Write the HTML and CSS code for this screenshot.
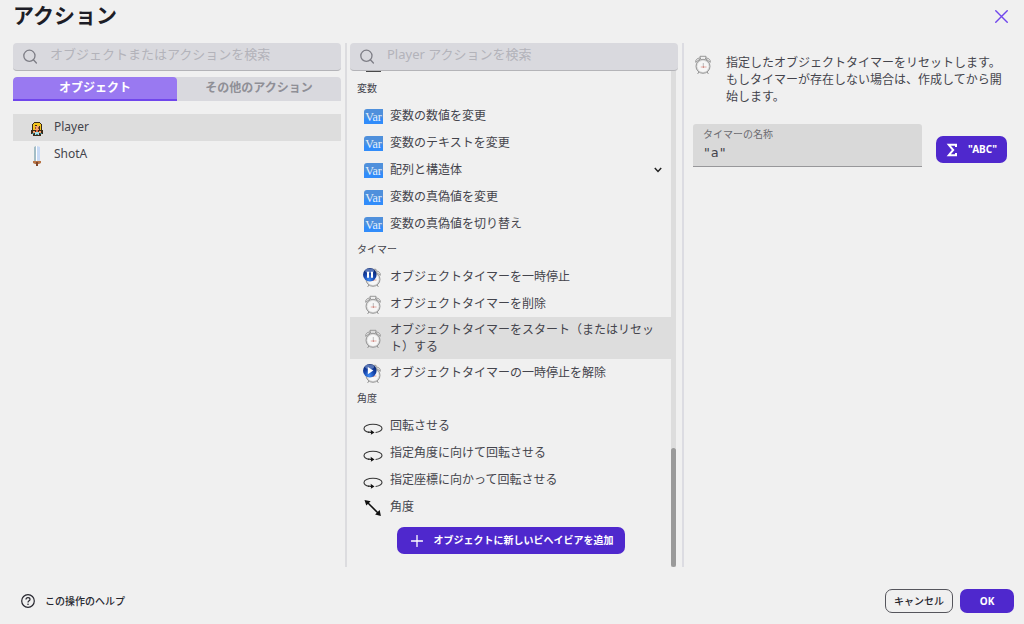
FILE: index.html
```html
<!DOCTYPE html>
<html lang="ja">
<head>
<meta charset="utf-8">
<title>アクション</title>
<link rel="stylesheet" href="styles.css">
</head>
<body>
<svg class="defs" aria-hidden="true">
  <defs>
    <linearGradient id="varfill" x1="0" y1="0" x2="0" y2="1"><stop offset=".5" stop-color="#4f90dc"/><stop offset=".7" stop-color="#318cfa"/></linearGradient>
    <radialGradient id="orb" cx=".45" cy=".85" r=".8"><stop offset="0" stop-color="#3f8cf5"/><stop offset=".5" stop-color="#1746ad"/><stop offset="1" stop-color="#06236f"/></radialGradient>
    <symbol id="search" viewBox="0 0 16 16"><g fill="none" stroke="currentColor" stroke-width="1.3" stroke-linecap="round"><circle cx="7.4" cy="6.8" r="5.6"/><path d="M11.4 10.8l3 3.2"/></g></symbol>
    <symbol id="clock" viewBox="0 0 20 20"><g stroke="#8f8f8f" stroke-width=".9"><path fill="none" d="M7 3V1.3h6V3M5.8 17l-1.2 2M14.2 17l1.2 2"/><path fill="#e9e9e9" d="M2.7 7.3C2.2 4.5 5 2.5 8 3.3zM17.3 7.3C17.8 4.5 15 2.5 12 3.3z"/><circle fill="#d8d8d8" cx="10" cy="11.3" r="7"/></g><circle fill="#f6f6f6" cx="10" cy="11.3" r="5.6"/><path d="M10.3 8v3.8" stroke="#aaa" stroke-width=".8"/><path d="M7.8 12h5.7" stroke="#e29a91" stroke-width=".8"/><circle cx="10.4" cy="12" r=".6" fill="#b34a42"/></symbol>
    <symbol id="pause" viewBox="0 0 20 20"><use href="#clock"/><circle cx="6.8" cy="6.8" r="6.8" fill="url(#orb)"/><ellipse cx="6.6" cy="2.8" rx="4.5" ry="2.2" fill="#8ba5da" opacity=".6"/><path d="M5 3.7v6M9 3.7v6" stroke="#fff" stroke-width="2"/></symbol>
    <symbol id="play" viewBox="0 0 20 20"><use href="#clock"/><circle cx="6.8" cy="6.8" r="6.8" fill="url(#orb)"/><ellipse cx="6.6" cy="2.8" rx="4.5" ry="2.2" fill="#8ba5da" opacity=".6"/><path d="M4.8 2.9v7.4l5.6-3.7z" fill="#fff"/></symbol>
    <symbol id="rotate" viewBox="0 0 20 20"><path d="M6 15.4C2.6 14.6 1 13 1 11.4 1 9.2 4.9 7.3 10 7.3s9 1.8 9 4c0 2.2-2.6 3.7-6.4 4.2" fill="none" stroke="#383838" stroke-width="1.1"/><path d="M7.6 12.8l3.9 2.7-3.7 2.3.3-1.8-3-.6.3-1 2.6.4z" fill="#111"/></symbol>
    <symbol id="angle" viewBox="0 0 20 20"><path d="M4 4l12.5 12.5" stroke="#111" stroke-width="1.6"/><path d="M1.5 2l6.2 1.2-4.4 4.3zM17.9 18l-1.2-6-4.6 4.6z" fill="#111"/></symbol>
    <symbol id="var" viewBox="0 0 20 16"><path d="M4 0h16v15H1V3q0-3 3-3z" fill="url(#varfill)"/><text x="10.5" y="12" text-anchor="middle" class="var-text">Var</text></symbol>
  </defs>
</svg>
<div class="dialog">
  <header class="head">
    <h1>アクション</h1>
    <button class="close" aria-label="閉じる"><svg viewBox="0 0 12 12"><path d="M.7.7l10.6 10.6M11.3.7L.7 11.3" stroke="#7046ec" stroke-width="1.3" stroke-linecap="round"/></svg></button>
  </header>
  <main class="columns">
    <section class="objects">
      <label class="search"><svg><use href="#search"/></svg><input type="text" aria-label="オブジェクトまたはアクションを検索" placeholder="オブジェクトまたはアクションを検索"></label>
      <div class="tabs" role="tablist">
        <button class="tab active" role="tab" aria-selected="true">オブジェクト</button>
        <button class="tab" role="tab" aria-selected="false">その他のアクション</button>
      </div>
      <ul class="object-list">
        <li class="object selected"><svg viewBox="0 0 12 14"><path fill="#3a2a18" d="M3 0h6v1h1v1h1v6h1v4h-2v2H2v-2H0V8h1V2h1V1h1z"/><path fill="#f3c51e" d="M3 1h6v1h1v6H9V4H6V3H4v5H2V2h1z"/><path fill="#f5a06a" d="M4 4h4v4H4zM2 9h2v2H2zM8 9h2v2H8z"/><path fill="#9a5433" d="M4 5h1v2H4zM7 5h1v2H7z"/><path fill="#e36940" d="M5 8h2v2H5z"/><path fill="#a3dde4" d="M4 10h4v3H4z"/><path fill="#387e86" d="M1 11h2v1H1zM9 11h2v1H9zM5 12h2v1H5z"/></svg>Player</li>
        <li class="object"><svg class="sword" viewBox="0 0 10 20"><path fill="#a3bdc6" d="M2 1l2-1v16H2z"/><path fill="#fff" d="M4 0h1v16H4z"/><path fill="#c8daf5" d="M5 0l3 1v15H5z"/><path fill="#b87546" d="M1 15h8v2l-2 1H3l-2-1z"/><path fill="#7f452b" d="M4 16h2v4H4z"/></svg>ShotA</li>
      </ul>
    </section>
    <section class="actions">
      <label class="search"><svg><use href="#search"/></svg><input type="text" aria-label="Player アクションを検索" placeholder="Player アクションを検索"></label>
      <div class="scroll">
        <div class="list">
          <div class="passed"></div>
          <h2>変数</h2>
          <div class="row"><svg class="var"><use href="#var"/></svg><span>変数の数値を変更</span></div>
          <div class="row"><svg class="var"><use href="#var"/></svg><span>変数のテキストを変更</span></div>
          <div class="row"><svg class="var"><use href="#var"/></svg><span>配列と構造体</span><svg class="chevron" viewBox="0 0 8 6"><path d="M.8 1L4 4.4 7.2 1" fill="none" stroke="#222" stroke-width="1.5"/></svg></div>
          <div class="row"><svg class="var"><use href="#var"/></svg><span>変数の真偽値を変更</span></div>
          <div class="row"><svg class="var"><use href="#var"/></svg><span>変数の真偽値を切り替え</span></div>
          <h2>タイマー</h2>
          <div class="row"><svg><use href="#pause"/></svg><span>オブジェクトタイマーを一時停止</span></div>
          <div class="row"><svg><use href="#clock"/></svg><span>オブジェクトタイマーを削除</span></div>
          <div class="row selected"><svg><use href="#clock"/></svg><span>オブジェクトタイマーをスタート（またはリセット）する</span></div>
          <div class="row"><svg><use href="#play"/></svg><span>オブジェクトタイマーの一時停止を解除</span></div>
          <h2>角度</h2>
          <div class="row"><svg><use href="#rotate"/></svg><span>回転させる</span></div>
          <div class="row"><svg><use href="#rotate"/></svg><span>指定角度に向けて回転させる</span></div>
          <div class="row"><svg><use href="#rotate"/></svg><span>指定座標に向かって回転させる</span></div>
          <div class="row"><svg><use href="#angle"/></svg><span>角度</span></div>
          <button class="primary add"><svg viewBox="0 0 12 12"><path d="M6 .5v11M.5 6h11" stroke="#fff" stroke-width="1.3" stroke-linecap="round"/></svg>オブジェクトに新しいビヘイビアを追加</button>
        </div>
        <div class="track"><div class="thumb"></div></div>
      </div>
    </section>
    <section class="details">
      <div class="description"><svg><use href="#clock"/></svg><p>指定したオブジェクトタイマーをリセットします。もしタイマーが存在しない場合は、作成してから開始します。</p></div>
      <div class="parameter">
        <div class="field"><label for="timer">タイマーの名称</label><input id="timer" type="text" value="&quot;a&quot;"></div>
        <button class="primary expression"><svg viewBox="0 0 12 14"><path d="M10 4V1.8H2.8L7.2 7l-4.4 5.2H10V10" fill="none" stroke="#fff" stroke-width="2"/></svg>"ABC"</button>
      </div>
    </section>
  </main>
  <footer class="foot">
    <button class="help"><svg viewBox="0 0 14 14"><g fill="none" stroke="#26262e" stroke-width="1.2"><circle cx="7" cy="7" r="6.3"/><path d="M5 5.6C5 4.3 5.8 3.7 7 3.7s2 .7 2 1.7C9 6.8 7 6.7 7 8.4"/></g><circle cx="7" cy="10.2" r=".8" fill="#26262e"/></svg>この操作のヘルプ</button>
    <button class="cancel">キャンセル</button>
    <button class="primary ok">OK</button>
  </footer>
</div>
</body>
</html>
```
FILE: styles.css
```css
* { box-sizing: border-box; }
body { margin: 0; background: #f0f0f0; color: #44444c; font: 12px/17px "Noto Sans", "Noto Sans CJK JP", sans-serif; }
button, input { font: inherit; color: inherit; margin: 0; padding: 0; border: 0; background: none; }
h1, h2, p, ul { margin: 0; padding: 0; }
svg { flex: none; display: block; }
.defs { position: absolute; width: 0; height: 0; }
.dialog { display: flex; flex-direction: column; min-height: 100vh; }

.head { display: flex; justify-content: space-between; align-items: center; height: 32px; margin-bottom: 11px; padding: 0 16px 0 13px; }
h1 { font-size: 21px; line-height: 30px; padding-bottom: 2px; color: #1d1d26; }
.close svg { width: 13px; height: 13px; }

.columns { flex: 1; display: grid; grid-template-columns: 332fr 337fr 329fr; padding: 0 13px; }
.objects { padding-right: 4px; }
.actions { display: flex; flex-direction: column; padding: 0 4px 0 3px; border-left: 2px solid #dcdcdf; }
.details { padding: 10px 4px 0 9px; border-left: 2px solid #dcdce2; }

.search { display: flex; align-items: center; gap: 12px; height: 28px; padding: 0 9px; background: #d9d9de; border-radius: 4px; border-bottom: 1px solid #b4b4b8; color: #7d7d85; }
.search svg { width: 16px; height: 16px; }
.search input { flex: 1; min-width: 0; height: 18px; margin-bottom: 6px; font-size: 13px; outline: 0; }
.search input::placeholder { color: #b3b3ba; opacity: 1; }

.tabs { display: flex; margin-top: 6px; border-radius: 4px 4px 0 0; overflow: hidden; background: #d9d9de; }
.tab { flex: 1; height: 24px; padding-bottom: 2px; font-weight: 700; line-height: 18px; color: #8f8f96; }
.tab.active { background: #9979f1; color: #fff; border-bottom: 2px solid #7046ec; border-radius: 4px 4px 0 0; padding-bottom: 0; }

.object-list { list-style: none; margin-top: 13px; }
.object { display: flex; align-items: center; gap: 11px; height: 27px; padding: 0 0 2px 18px; }
.object svg { width: 12px; height: 14px; margin-top: 4px; }
.object .sword { width: 12px; height: 20px; }
.selected { background: #dddddd; }

.scroll { flex: 1; display: flex; }
.list { flex: 1; display: flex; flex-direction: column; }
.passed { width: 15px; height: 5px; margin-left: 16px; border-top: 1px solid #4a4a4a; }
h2 { height: 26px; padding-left: 7px; font-size: 10px; font-weight: 400; line-height: 25px; }
.row { display: flex; align-items: center; gap: 7px; min-height: 27px; padding: 4px 14px 4px 13px; }
.row span { flex: 1; }
.row svg { width: 20px; height: 20px; margin-top: 2px; }
.row .var { height: 16px; margin-top: 3px; }
.row .chevron { width: 8px; height: 6px; margin: 0 -5px 0 0; }
.var-text { font: 12px "Liberation Serif", serif; fill: #e6f0fb; }
.row:not(.selected) { padding-top: 0; padding-bottom: 0; }
.track { width: 5px; margin-right: 2px; background: #dddddd; display: flex; align-items: flex-end; }
.thumb { width: 5px; height: 24%; border-radius: 3px; background: #9a9a9a; }

.primary { display: flex; align-items: center; justify-content: center; height: 27px; border-radius: 7px; background: #4f28cd; color: #fff; font-size: 10px; font-weight: 700; }
.add { align-self: center; gap: 11px; margin-top: 7px; padding: 0 11px 0 14px; }
.add svg { width: 12px; height: 12px; }

.description { display: flex; gap: 13px; }
.description svg { width: 20px; height: 20px; margin-top: 2px; }
.description p { padding-top: 1px; }
.parameter { display: flex; align-items: center; gap: 14px; margin-top: 19px; }
.field { flex: 1; min-width: 0; display: flex; flex-direction: column; height: 43px; padding: 3px 10px 0; background: #d9d9d9; border-bottom: 1px solid #97979a; border-radius: 3px 3px 0 0; }
.field label { font-size: 10px; line-height: 15px; color: #6b6b70; }
.field input { width: 100%; height: 20px; font-family: "DejaVu Sans Mono", monospace; font-size: 13px; outline: 0; }
.expression { gap: 10px; width: 71px; margin-top: 8px; }
.expression svg { width: 12px; height: 14px; }

.foot { display: flex; align-items: center; gap: 7px; padding: 22px 10px 11px 21px; }
.help { display: flex; align-items: center; gap: 10px; margin-right: auto; font-size: 10px; font-weight: 500; color: #26262e; }
.help svg { width: 14px; height: 14px; }
.cancel { height: 24px; padding: 0 8px; border: 1px solid #55555c; border-radius: 7px; font-size: 10px; font-weight: 500; color: #26262e; }
.ok { width: 54px; height: 24px; }
```
